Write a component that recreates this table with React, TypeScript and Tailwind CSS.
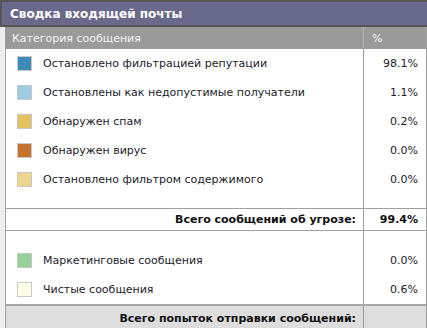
import React from 'react';

type Row = { label: string; color: string; pct: string };

const threatRows: Row[] = [
  { label: 'Остановлено фильтрацией репутации', color: 'bg-[#3d8bba]', pct: '98.1%' },
  { label: 'Остановлены как недопустимые получатели', color: 'bg-[#9dcbe0]', pct: '1.1%' },
  { label: 'Обнаружен спам', color: 'bg-[#e3c062]', pct: '0.2%' },
  { label: 'Обнаружен вирус', color: 'bg-[#c4732e]', pct: '0.0%' },
  { label: 'Остановлено фильтром содержимого', color: 'bg-[#ecd68e]', pct: '0.0%' },
];

const cleanRows: Row[] = [
  { label: 'Маркетинговые сообщения', color: 'bg-[#95d09b]', pct: '0.0%' },
  { label: 'Чистые сообщения', color: 'bg-[#ffffe8]', pct: '0.6%' },
];

const ItemRow = ({ row }: { row: Row }) => (
  <div className="flex h-[29px] items-center">
    <div className="flex flex-1 items-center pl-[11px]">
      <span className={`w-[15px] h-[15px] border border-[#c8c8c8] ${row.color}`}></span>
      <span className="ml-[11px] text-[#1b1b2a]">{row.label}</span>
    </div>
    <div className="w-[63px] self-stretch border-l border-[#a0a0a0] flex items-center justify-end pr-[8px] text-[#1b1b2a]">
      {row.pct}
    </div>
  </div>
);

const Spacer = ({ h }: { h: string }) => (
  <div className={`flex ${h}`}>
    <div className="flex-1"></div>
    <div className="w-[63px] border-l border-[#a0a0a0]"></div>
  </div>
);

export default function App() {
  return (
    <div className="w-[427px] h-[328px] overflow-hidden bg-[#eeeeee] text-[11px] leading-none" style={{ fontFamily: 'Verdana, "DejaVu Sans", sans-serif' }}>
      <div className="h-[27px] bg-[#69698b] border-t-2 border-l-2 border-b-2 border-[#555555] flex items-center pl-[8px]">
        <span className="text-white font-bold text-[12px]">Сводка входящей почты</span>
      </div>
      <div className="ml-[5px] w-[422px] border-l border-r border-[#a0a0a0] bg-white">
        <div className="flex h-[22px] bg-[#9a9a9a] text-[#f4f4f4]">
          <div className="flex-1 flex items-center pl-[6px]">Категория сообщения</div>
          <div className="w-[63px] border-l border-[#b4b4b4] flex items-center pl-[8px]">%</div>
        </div>
        {threatRows.map((r) => (
          <ItemRow key={r.label} row={r} />
        ))}
        <Spacer h="h-[14px]" />
        <div className="flex h-[23px] border-t border-b border-[#a0a0a0] font-bold text-[#111]">
          <div className="flex-1 flex items-center justify-end pr-[7px]">Всего сообщений об угрозе:</div>
          <div className="w-[63px] border-l border-[#a0a0a0] flex items-center justify-end pr-[8px]">99.4%</div>
        </div>
        <Spacer h="h-[15px]" />
        {cleanRows.map((r) => (
          <ItemRow key={r.label} row={r} />
        ))}
        <div className="flex h-[26px] border-t-2 border-[#a8a8a8] bg-[#dddddd] font-bold text-[#111]">
          <div className="flex-1 flex items-center justify-end pr-[7px]">Всего попыток отправки сообщений:</div>
          <div className="w-[63px] border-l border-[#a0a0a0]"></div>
        </div>
      </div>
    </div>
  );
}
